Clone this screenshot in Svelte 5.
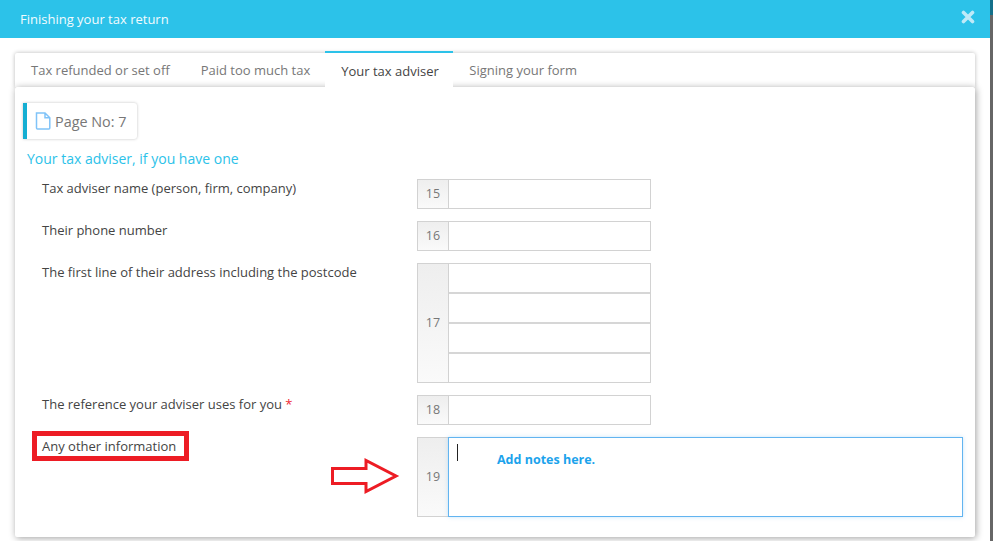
<script>
  const tabs = ['Tax refunded or set off', 'Paid too much tax', 'Your tax adviser', 'Signing your form'];
</script>

<div class="page">
  <div class="modal">
    <header class="bar">
      <span class="title">Finishing your tax return</span>
      <svg class="close" viewBox="0 0 14 14" width="14" height="14" aria-hidden="true">
        <path d="M2.5 2.5 L11.5 11.5 M11.5 2.5 L2.5 11.5" stroke="#bfeaf8" stroke-width="3.6" stroke-linecap="round" fill="none" />
      </svg>
    </header>
    <div class="wrap">
      <div class="tabs">
        {#each tabs as t, i}
          <div class="tab" class:active={i === 2}>{t}</div>
        {/each}
      </div>
      <div class="card">
        <div class="pageno">
          <svg viewBox="0 0 16 18" width="16" height="18" aria-hidden="true">
            <path d="M1.5 1 H10 L14.8 5.8 V16 a1 1 0 0 1 -1 1 H2.5 a1 1 0 0 1 -1 -1 Z M10 1 V5.8 H14.8" fill="none" stroke="#80c3f8" stroke-width="1.5" />
          </svg>
          <span>Page No: 7</span>
        </div>
        <h2>Your tax adviser, if you have one</h2>

        <div class="row first">
          <div class="label">Tax adviser name (person, firm, company)</div>
          <div class="field"><div class="num">15</div><div class="inputs"><div class="cell"></div></div></div>
        </div>
        <div class="row">
          <div class="label">Their phone number</div>
          <div class="field"><div class="num">16</div><div class="inputs"><div class="cell"></div></div></div>
        </div>
        <div class="row">
          <div class="label">The first line of their address including the postcode</div>
          <div class="field"><div class="num">17</div><div class="inputs">
            <div class="cell"></div><div class="cell"></div><div class="cell"></div><div class="cell"></div>
          </div></div>
        </div>
        <div class="row">
          <div class="label">The reference your adviser uses for you <span class="req">*</span></div>
          <div class="field"><div class="num">18</div><div class="inputs"><div class="cell"></div></div></div>
        </div>
        <div class="row last">
          <div class="label"><span class="boxed">Any other information</span></div>
          <svg class="arrow" viewBox="0 0 70 36" width="70" height="36" aria-hidden="true">
            <path d="M1.5 10.5 H35 V2.5 L65 18 L35 33.5 V25.5 H1.5 Z" fill="#fff" stroke="#ed1c24" stroke-width="3" />
          </svg>
          <div class="field wide"><div class="num">19</div>
            <div class="notes"><i class="caret"></i><span class="hint">Add notes here.</span></div>
          </div>
        </div>
      </div>
    </div>
  </div>
  <div class="edge"></div>
</div>

<style>
  :global(body) {
    margin: 0;
    font-family: "Open Sans", "Noto Sans", sans-serif;
    background: #fff;
  }
  .page {
    display: flex;
    width: 993px;
    height: 541px;
    overflow: hidden;
  }
  .modal {
    width: 990px;
    flex: none;
    background: #fff;
  }
  .edge {
    flex: 1;
    background: linear-gradient(#14708a 0, #14708a 15px, #666 15px);
  }
  .bar {
    height: 38px;
    background: #2cc2e9;
    display: flex;
    align-items: center;
    justify-content: space-between;
    padding: 0 15px 0 20px;
    color: #fff;
  }
  .title {
    font-size: 13px;
    font-weight: 400;
    color: #f2fbfe;
  }
  .close {
    margin-top: -5px;
  }
  .wrap {
    margin: 15px 15px 0 15px;
    width: 960px;
  }
  .tabs {
    display: flex;
    height: 34px;
    background: #fff;
    box-shadow: 0 0 4px rgba(0, 0, 0, 0.28);
    border-radius: 2px 2px 0 0;
    position: relative;
  }
  .tab {
    font-size: 13px;
    color: #777;
    padding: 8px 15px 0 16px;
    box-sizing: border-box;
    height: 34px;
    white-space: nowrap;
  }
  .tab.active {
    color: #444;
    background: #fff;
    border-top: 2px solid #2cc2e9;
    margin-top: -2px;
    height: 37px;
    position: relative;
    z-index: 3;
    padding: 9px 14.5px 0 16px;
  }
  .card {
    position: relative;
    z-index: 2;
    height: 450px;
    box-sizing: border-box;
    background: #fff;
    border-radius: 2px;
    box-shadow: 1px 1px 7px rgba(0, 0, 0, 0.38);
    padding: 16px 12px 0 8px;
  }
  .pageno {
    display: inline-flex;
    align-items: center;
    gap: 4px;
    height: 36px;
    box-sizing: border-box;
    padding: 0 10px 0 8px;
    border-left: 4px solid #14aed2;
    border-radius: 0 3px 3px 0;
    box-shadow: 0 0 3px rgba(0, 0, 0, 0.25);
    font-size: 14.4px;
    color: #777;
  }
  h2 {
    margin: 10px 0 0 4px;
    font-size: 14px;
    line-height: 19px;
    font-weight: 400;
    color: #2cc2e9;
  }
  .row {
    display: flex;
    justify-content: space-between;
    margin: 12px 0 0 0;
    width: 628px;
  }
  .row.first {
    margin-top: 11px;
  }
  .label {
    padding: 0 0 0 19px;
    font-size: 13px;
    line-height: 18px;
    color: #444;
  }
  .req {
    color: #ee2a34;
  }
  .boxed {
    display: inline-block;
    outline: 5px solid #ed1c24;
    position: relative;
    top: -1px;
    padding: 0 8px 0 5px;
    margin-left: -5px;
    line-height: 20px;
    background: #fff;
  }
  .field {
    display: flex;
    width: 234px;
    flex: none;
    box-sizing: border-box;
    border: 1px solid #d2d2d2;
  }
  .num {
    flex: none;
    display: flex;
    align-items: center;
    justify-content: center;
    font-size: 12.5px;
    color: #777;
    background: linear-gradient(#eee, #fafafa);
    border-right: 1px solid #d2d2d2;
    box-sizing: border-box;
    width: 31px;
    padding-bottom: 1px;
  }
  .inputs {
    flex: 1;
  }
  .cell {
    height: 28px;
    background: #fff;
  }
  .cell + .cell {
    border-top: 2px solid #d6d6d6;
  }
  .row.last {
    width: 940px;
    position: relative;
  }
  .wide {
    width: 546px;
    height: 80px;
    border: none;
  }
  .wide .num {
    border: 1px solid #d2d2d2;
    border-right: none;
  }
  .notes {
    flex: 1;
    box-sizing: border-box;
    border: 1px solid #62b4f0;
    box-shadow: 0 0 4px rgba(98, 180, 240, 0.35);
    position: relative;
    background: #fff;
  }
  .caret {
    position: absolute;
    left: 8px;
    top: 6px;
    width: 1px;
    height: 17px;
    background: #222;
  }
  .hint {
    position: absolute;
    left: 48px;
    top: 13px;
    font-size: 12.5px;
    font-weight: 700;
    color: #1ca3ec;
  }
  .arrow {
    position: absolute;
    left: 308px;
    top: 21px;
    overflow: visible;
  }
</style>
